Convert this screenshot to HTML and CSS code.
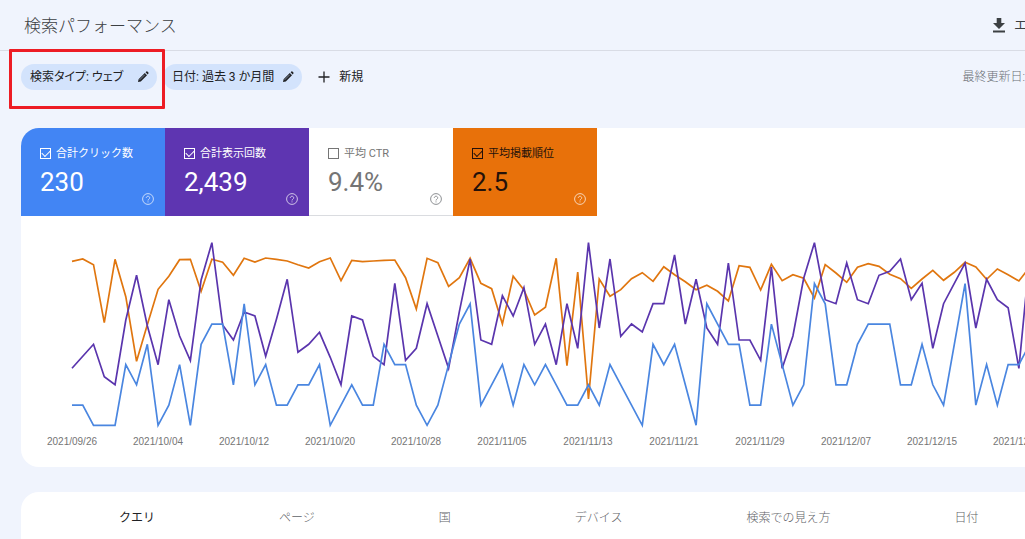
FILE: index.html
```html
<!DOCTYPE html>
<html lang="ja">
<head>
<meta charset="utf-8">
<title>検索パフォーマンス</title>
<link rel="stylesheet" href="styles.css">
</head>
<body>
<header class="header">
  <h1 class="title">検索パフォーマンス</h1>
  <button class="export" type="button">
    <svg class="export-icon" viewBox="0 0 14 16" aria-hidden="true"><path d="M4.700 1h4.600v5H13l-6 6-6-6h3.700zM1 13.500h12v2H1z" fill="currentColor"/></svg>
    <span>エ</span>
  </button>
</header>

<section class="filters">
  <div class="highlighted">
    <button class="chip" type="button">
      <span>検索タイプ: ウェブ</span>
      <svg class="pencil" viewBox="0 0 12 12" aria-hidden="true"><path d="M1 11l.6-2.800L7.800 2l2.200 2.200-6.200 6.200zM8.600 1.200L9.400.500q.5-.3 1 .1l1 1q.4.5 0 1l-.7.800z" fill="#202124"/><path d="M2.600 8.900L7.800 3.700" stroke="#8fa0b8" stroke-width=".8"/></svg>
    </button>
    <span class="highlight-frame"></span>
  </div>
  <button class="chip" type="button">
    <span>日付: 過去 3 か月間</span>
    <svg class="pencil" viewBox="0 0 12 12" aria-hidden="true"><path d="M1 11l.6-2.800L7.800 2l2.200 2.200-6.200 6.200zM8.600 1.200L9.400.500q.5-.3 1 .1l1 1q.4.5 0 1l-.7.800z" fill="#202124"/><path d="M2.600 8.900L7.800 3.700" stroke="#8fa0b8" stroke-width=".8"/></svg>
  </button>
  <button class="add" type="button">
    <svg class="plus" viewBox="0 0 12 12" aria-hidden="true"><path d="M6 .5v11M.5 6h11" stroke="currentColor" stroke-width="1.300"/></svg>
    <span>新規</span>
  </button>
  <span class="updated">最終更新日:</span>
</section>

<main>
  <section class="card report">
    <div class="metrics">
      <div class="metric metric-clicks">
        <label class="metric-label"><input class="check" type="checkbox" checked>合計クリック数</label>
        <div class="metric-row"><span class="value">230</span>
          <button class="help" type="button" aria-label="ヘルプ"><svg viewBox="0 0 12 12"><circle cx="6" cy="6" r="5.400"/><path d="M4.300 4.900a1.700 1.600 0 1 1 2.700 1.200Q6 6.700 6 7.500M6 8.400v1"/></svg></button></div>
      </div>
      <div class="metric metric-impressions">
        <label class="metric-label"><input class="check" type="checkbox" checked>合計表示回数</label>
        <div class="metric-row"><span class="value">2,439</span>
          <button class="help" type="button" aria-label="ヘルプ"><svg viewBox="0 0 12 12"><circle cx="6" cy="6" r="5.400"/><path d="M4.300 4.900a1.700 1.600 0 1 1 2.700 1.200Q6 6.700 6 7.500M6 8.400v1"/></svg></button></div>
      </div>
      <div class="metric metric-ctr">
        <label class="metric-label"><input class="check" type="checkbox">平均 CTR</label>
        <div class="metric-row"><span class="value">9.4%</span>
          <button class="help" type="button" aria-label="ヘルプ"><svg viewBox="0 0 12 12"><circle cx="6" cy="6" r="5.400"/><path d="M4.300 4.900a1.700 1.600 0 1 1 2.700 1.200Q6 6.700 6 7.500M6 8.400v1"/></svg></button></div>
      </div>
      <div class="metric metric-position">
        <label class="metric-label"><input class="check" type="checkbox" checked>平均掲載順位</label>
        <div class="metric-row"><span class="value">2.5</span>
          <button class="help" type="button" aria-label="ヘルプ"><svg viewBox="0 0 12 12"><circle cx="6" cy="6" r="5.400"/><path d="M4.300 4.900a1.700 1.600 0 1 1 2.700 1.200Q6 6.700 6 7.500M6 8.400v1"/></svg></button></div>
      </div>
    </div>
    <div class="chart">
      <svg class="plot" id="plot" aria-hidden="true"></svg>
      <div class="dates">
        <span>2021/09/26</span><span>2021/10/04</span><span>2021/10/12</span><span>2021/10/20</span><span>2021/10/28</span><span>2021/11/05</span><span>2021/11/13</span><span>2021/11/21</span><span>2021/11/29</span><span>2021/12/07</span><span>2021/12/15</span><span>2021/12/23</span>
      </div>
    </div>
  </section>

  <nav class="card tabs">
    <button class="tab tab-active" type="button">クエリ</button>
    <button class="tab" type="button">ページ</button>
    <button class="tab" type="button">国</button>
    <button class="tab" type="button">デバイス</button>
    <button class="tab" type="button">検索での見え方</button>
    <button class="tab" type="button">日付</button>
  </nav>
</main>
<script src="chart.js"></script>
</body>
</html>
```
FILE: styles.css
```css
* { box-sizing: border-box; }

body {
  margin: 0;
  overflow: hidden;
  background: #f0f4fd;
  color: #202124;
  font: 12px/18px Roboto, "Noto Sans CJK JP", sans-serif;
}

button {
  margin: 0;
  padding: 0;
  border: 0;
  background: none;
  color: inherit;
  font: inherit;
  white-space: nowrap;
}

.header {
  display: flex;
  align-items: center;
  justify-content: space-between;
  height: 51px;
  padding-left: 24px;
  border-bottom: 1px solid #d9dce5;
}

.title {
  margin: 0;
  padding-top: 2px;
  color: #3c4043;
  font-size: 17px;
  font-weight: 300;
  line-height: 24px;
}

.export {
  display: flex;
  align-items: center;
  gap: 8px;
  margin-right: -2px;
  color: #3c4043;
  font-size: 13px;
}

.export-icon { width: 14px; height: 16px; }

.filters {
  display: flex;
  align-items: center;
  height: 52px;
  padding-left: 21px;
}

.highlighted { position: relative; margin-right: 6px; }

.highlight-frame {
  position: absolute;
  inset: -15px -8px -19px -12px;
  border: 3px solid #ed1c24;
  border-radius: 1px;
  pointer-events: none;
}

.chip {
  display: flex;
  align-items: center;
  justify-content: space-between;
  gap: 8px;
  min-width: 136px;
  height: 26px;
  padding: 0 8px 0 9px;
  border-radius: 13px;
  background: #d3e3fc;
  font-feature-settings: "palt";
}

.pencil { width: 12px; height: 12px; }

.add {
  display: flex;
  align-items: center;
  gap: 9px;
  margin-left: 16px;
}

.plus { width: 12px; height: 12px; }

.updated {
  margin-left: auto;
  color: #6b7076;
  font-weight: 300;
  white-space: nowrap;
}

main {
  display: flex;
  flex-direction: column;
  gap: 25px;
  padding: 25px 0 0 21px;
}

.card {
  overflow: hidden;
  background: #fff;
}

.report { border-radius: 18px 0 0 18px; }

.metrics { display: flex; }

.metric {
  display: flex;
  flex-direction: column;
  gap: 6px;
  width: 144px;
  height: 88px;
  padding: 19px 11px 11px 19px;
}

.metric-clicks { background: #4285f4; color: #fff; }
.metric-impressions { background: #5e35b1; color: #fff; }
.metric-ctr { box-shadow: inset 0 -1px #dadce0; color: #757575; }
.metric-position { background: #e8710a; color: #24110a; }

.metric-label {
  display: flex;
  align-items: center;
  gap: 5px;
  font-size: 11px;
  line-height: 14px;
}

.check {
  display: grid;
  place-items: center;
  width: 11px;
  height: 11px;
  margin: 0 0 2px;
  border: 1px solid currentColor;
  appearance: none;
  color: inherit;
}

.check:checked::after {
  content: "";
  width: 7px;
  height: 4px;
  margin-bottom: 2px;
  border: solid currentColor;
  border-width: 0 0 1px 1px;
  transform: rotate(-45deg);
}

.metric-row {
  display: flex;
  justify-content: space-between;
  height: 38px;
}

.value { font-size: 26px; line-height: 30px; }

.help { align-self: flex-end; height: 12px; }

.help svg {
  display: block;
  width: 12px;
  height: 12px;
  fill: none;
  stroke: #fff;
  stroke-width: 1;
  opacity: 0.700;
}

.metric-ctr .help svg { stroke: #5f6368; }

.chart { padding: 14px 0 16px 8px; }

.plot {
  display: block;
  width: calc(100% - 43px);
  height: 202px;
  margin-left: 43px;
  overflow: visible;
}

.plot polyline { fill: none; stroke-width: 1.700; }
.clicks { stroke: #4a86e0; }
.impressions { stroke: #5a35ad; }
.position { stroke: #e0760f; }

.dates { display: flex; }

.dates span {
  flex: 0 0 86px;
  color: #757575;
  font: 10px/19px "Liberation Sans", sans-serif;
  text-align: center;
}

.tabs {
  display: flex;
  padding-left: 36px;
  border-radius: 18px 0 0 0;
}

.tab {
  flex: none;
  height: 50px;
  padding: 2px 62px 0;
  color: #5f6368;
  font-weight: 300;
}

.tab-active { color: #202124; font-weight: 400; }
```
FILE: chart.js
```js
const STEP = 10.76;

// Daily clicks, from the first date on the axis.
const clicks = [1,1,0,0,0,3,2,4,0,1,3,0,4,5,5,2,6,2,3,1,1,2,2,3,0,1,2,1,1,4,3,3,1,0,1,3,5,6,1,2,3,1,3,2,3,2,1,1,2,1,3,2,1,0,4,3,4,2,0,6,5,4,4,1,1,5,3,1,2,7,6,2,2,4,5,5,5,2,2,4,2,1,4,7,1,3,1,3,3,4];

// Heights below the top of the plot, in thirds of a pixel.
const impressions = [415,379,343,440,464,270,136,287,404,209,318,392,150,38,285,330,246,258,379,268,148,367,343,307,382,464,258,270,379,404,160,391,355,221,318,415,245,87,330,343,197,258,173,343,282,404,221,355,38,294,87,319,282,306,221,221,75,282,148,294,343,99,330,330,391,111,415,318,145,38,209,221,99,209,221,136,124,87,209,160,355,221,160,99,294,148,209,233,415,80];
const position = [94,87,104,278,88,200,394,284,178,139,89,88,184,88,97,136,85,96,84,88,93,104,114,95,84,152,91,95,93,91,90,143,237,85,98,169,143,85,160,176,282,139,180,255,232,85,407,126,507,147,199,179,146,128,154,110,134,155,179,166,184,213,107,112,180,103,152,134,145,204,104,129,157,112,101,109,133,146,175,147,121,151,127,97,111,148,117,134,153,112];

function drawLine(name, heights) {
  const line = document.createElementNS("http://www.w3.org/2000/svg", "polyline");
  line.setAttribute("class", name);
  line.setAttribute("points", heights.map((y, i) => `${i * STEP},${y.toFixed(1)}`).join(" "));
  document.getElementById("plot").append(line);
}

drawLine("position", position.map(y => y / 3));
drawLine("impressions", impressions.map(y => y / 3));
drawLine("clicks", clicks.map(n => 195.3 - n * 20.25));
```
